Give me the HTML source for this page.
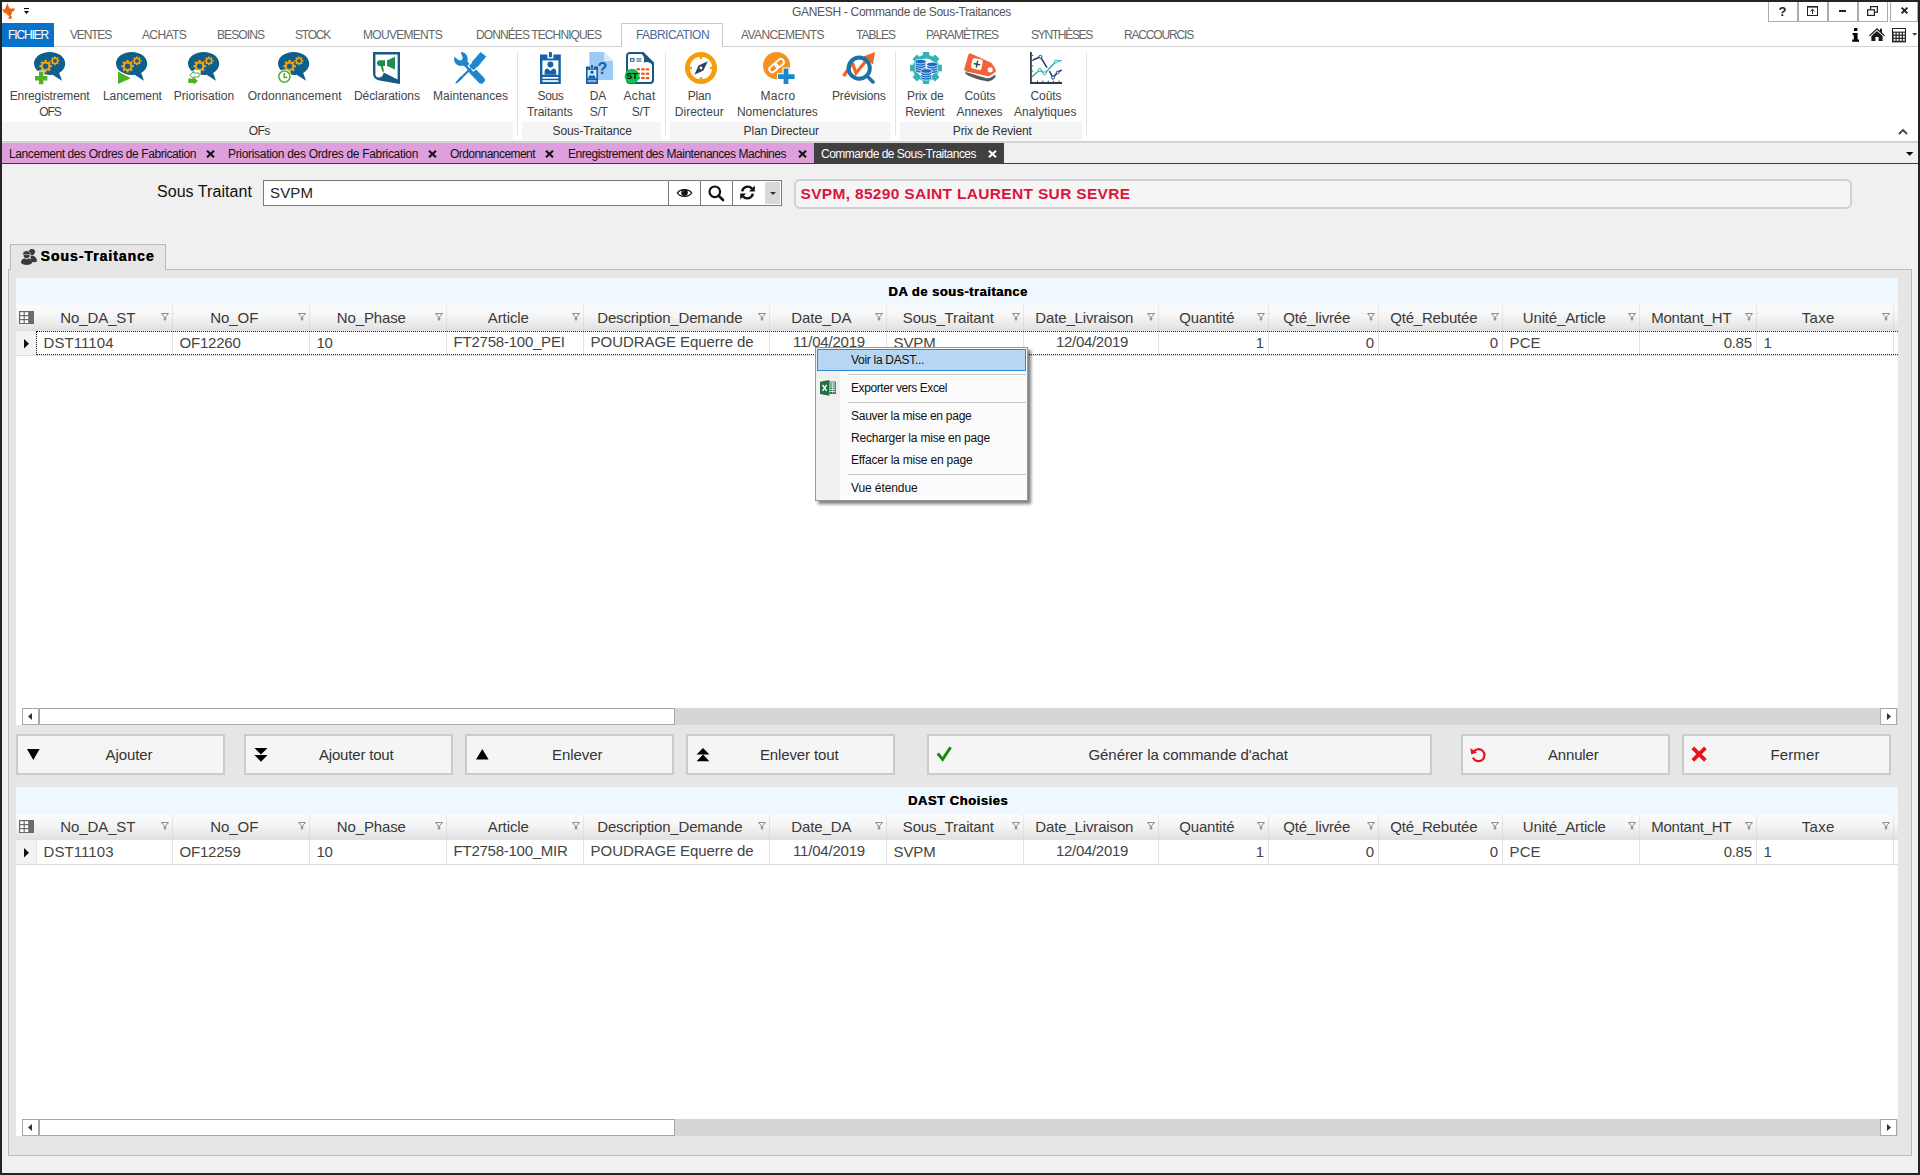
<!DOCTYPE html>
<html lang="fr"><head><meta charset="utf-8"><title>GANESH - Commande de Sous-Traitances</title>
<style>
html,body{margin:0;padding:0;}
body{width:1920px;height:1175px;overflow:hidden;position:relative;background:#f0f0f0;font-family:"Liberation Sans",Arial,sans-serif;}
.t{position:absolute;white-space:nowrap;margin:0;padding:0;}
.b{position:absolute;box-sizing:border-box;}
svg{position:absolute;overflow:visible;}
</style></head><body>

<div class="b" style="left:2px;top:2px;width:1916px;height:139px;background:#fff;"></div>
<div class="b" style="left:2px;top:141px;width:1916px;height:2px;background:linear-gradient(#cbcbcb,#dcdcdc);"></div>
<div class="t" style="left:792.00px;top:4.84px;font-size:12px;line-height:14px;color:#555;letter-spacing:-0.313px;">GANESH - Commande de Sous-Traitances</div>
<div class="b" style="left:2px;top:46px;width:1916px;height:1px;background:#d4d4d4;"></div>
<div class="b" style="left:2px;top:23px;width:52px;height:24px;background:#0872c9;"></div>
<div class="b" style="left:621px;top:23px;width:102px;height:24px;background:#fff;border:1px solid #c9c9c9;border-bottom:none;"></div>
<div class="t" style="left:8.00px;top:27.84px;font-size:12px;line-height:14px;color:#fff;letter-spacing:-1.143px;">FICHIER</div>
<div class="t" style="left:70.00px;top:27.84px;font-size:12px;line-height:14px;color:#666;letter-spacing:-1.167px;">VENTES</div>
<div class="t" style="left:142.00px;top:27.84px;font-size:12px;line-height:14px;color:#666;letter-spacing:-0.630px;">ACHATS</div>
<div class="t" style="left:217.00px;top:27.84px;font-size:12px;line-height:14px;color:#666;letter-spacing:-0.904px;">BESOINS</div>
<div class="t" style="left:295.00px;top:27.84px;font-size:12px;line-height:14px;color:#666;letter-spacing:-1.222px;">STOCK</div>
<div class="t" style="left:363.00px;top:27.84px;font-size:12px;line-height:14px;color:#666;letter-spacing:-0.700px;">MOUVEMENTS</div>
<div class="t" style="left:476.00px;top:27.84px;font-size:12px;line-height:14px;color:#666;letter-spacing:-0.896px;">DONNÉES TECHNIQUES</div>
<div class="t" style="left:636.00px;top:27.84px;font-size:12px;line-height:14px;color:#4a6a9c;letter-spacing:-0.555px;">FABRICATION</div>
<div class="t" style="left:741.00px;top:27.84px;font-size:12px;line-height:14px;color:#666;letter-spacing:-0.597px;">AVANCEMENTS</div>
<div class="t" style="left:856.00px;top:27.84px;font-size:12px;line-height:14px;color:#666;letter-spacing:-1.018px;">TABLES</div>
<div class="t" style="left:926.00px;top:27.84px;font-size:12px;line-height:14px;color:#666;letter-spacing:-0.978px;">PARAMÈTRES</div>
<div class="t" style="left:1031.00px;top:27.84px;font-size:12px;line-height:14px;color:#666;letter-spacing:-1.297px;">SYNTHÈSES</div>
<div class="t" style="left:1124.00px;top:27.84px;font-size:12px;line-height:14px;color:#666;letter-spacing:-1.169px;">RACCOURCIS</div>
<div class="b" style="left:2px;top:122px;width:511px;height:18px;background:#f5f5f5;"></div>
<div class="b" style="left:522px;top:122px;width:139px;height:18px;background:#f5f5f5;"></div>
<div class="b" style="left:670px;top:122px;width:221px;height:18px;background:#f5f5f5;"></div>
<div class="b" style="left:900px;top:122px;width:182px;height:18px;background:#f5f5f5;"></div>
<div class="b" style="left:517px;top:52px;width:1px;height:83px;background:#e2e2e2;"></div>
<div class="b" style="left:665px;top:52px;width:1px;height:83px;background:#e2e2e2;"></div>
<div class="b" style="left:895px;top:52px;width:1px;height:83px;background:#e2e2e2;"></div>
<div class="b" style="left:1086px;top:52px;width:1px;height:83px;background:#e2e2e2;"></div>
<div class="t" style="left:248.70px;top:123.84px;font-size:12px;line-height:14px;color:#333;letter-spacing:-0.552px;">OFs</div>
<div class="t" style="left:552.60px;top:123.84px;font-size:12px;line-height:14px;color:#333;letter-spacing:-0.123px;">Sous-Traitance</div>
<div class="t" style="left:743.55px;top:123.84px;font-size:12px;line-height:14px;color:#333;letter-spacing:-0.038px;">Plan Directeur</div>
<div class="t" style="left:952.85px;top:123.84px;font-size:12px;line-height:14px;color:#333;letter-spacing:-0.164px;">Prix de Revient</div>
<div class="t" style="left:9.70px;top:88.84px;font-size:12px;line-height:14px;color:#444;letter-spacing:-0.111px;">Enregistrement</div>
<div class="t" style="left:39.20px;top:104.84px;font-size:12px;line-height:14px;color:#444;letter-spacing:-1.019px;">OFS</div>
<div class="t" style="left:102.95px;top:88.84px;font-size:12px;line-height:14px;color:#444;letter-spacing:-0.051px;">Lancement</div>
<div class="t" style="left:173.75px;top:88.84px;font-size:12px;line-height:14px;color:#444;letter-spacing:0.039px;">Priorisation</div>
<div class="t" style="left:247.65px;top:88.84px;font-size:12px;line-height:14px;color:#444;letter-spacing:0.085px;">Ordonnancement</div>
<div class="t" style="left:353.95px;top:88.84px;font-size:12px;line-height:14px;color:#444;letter-spacing:-0.067px;">Déclarations</div>
<div class="t" style="left:433.05px;top:88.84px;font-size:12px;line-height:14px;color:#444;letter-spacing:0.016px;">Maintenances</div>
<div class="t" style="left:537.50px;top:88.84px;font-size:12px;line-height:14px;color:#444;letter-spacing:-0.336px;">Sous</div>
<div class="t" style="left:527.00px;top:104.84px;font-size:12px;line-height:14px;color:#444;letter-spacing:-0.070px;">Traitants</div>
<div class="t" style="left:589.85px;top:88.84px;font-size:12px;line-height:14px;color:#444;letter-spacing:-0.186px;">DA</div>
<div class="t" style="left:589.80px;top:104.84px;font-size:12px;line-height:14px;color:#444;letter-spacing:-0.285px;">S/T</div>
<div class="t" style="left:623.60px;top:88.84px;font-size:12px;line-height:14px;color:#444;letter-spacing:0.266px;">Achat</div>
<div class="t" style="left:631.75px;top:104.84px;font-size:12px;line-height:14px;color:#444;letter-spacing:-0.185px;">S/T</div>
<div class="t" style="left:687.70px;top:88.84px;font-size:12px;line-height:14px;color:#444;letter-spacing:-0.204px;">Plan</div>
<div class="t" style="left:674.75px;top:104.84px;font-size:12px;line-height:14px;color:#444;letter-spacing:0.024px;">Directeur</div>
<div class="t" style="left:760.50px;top:88.84px;font-size:12px;line-height:14px;color:#444;letter-spacing:0.331px;">Macro</div>
<div class="t" style="left:736.90px;top:104.84px;font-size:12px;line-height:14px;color:#444;letter-spacing:0.023px;">Nomenclatures</div>
<div class="t" style="left:832.05px;top:88.84px;font-size:12px;line-height:14px;color:#444;letter-spacing:-0.186px;">Prévisions</div>
<div class="t" style="left:907.00px;top:88.84px;font-size:12px;line-height:14px;color:#444;letter-spacing:-0.106px;">Prix de</div>
<div class="t" style="left:905.15px;top:104.84px;font-size:12px;line-height:14px;color:#444;letter-spacing:-0.198px;">Revient</div>
<div class="t" style="left:964.45px;top:88.84px;font-size:12px;line-height:14px;color:#444;letter-spacing:-0.049px;">Coûts</div>
<div class="t" style="left:956.55px;top:104.84px;font-size:12px;line-height:14px;color:#444;letter-spacing:-0.112px;">Annexes</div>
<div class="t" style="left:1030.45px;top:88.84px;font-size:12px;line-height:14px;color:#444;letter-spacing:-0.049px;">Coûts</div>
<div class="t" style="left:1013.95px;top:104.84px;font-size:12px;line-height:14px;color:#444;letter-spacing:0.043px;">Analytiques</div>
<svg style="left:34px;top:52px" width="32" height="32" viewBox="0 0 32 32"><path d="M15.6,0 C24.5,0 31.2,5 31.2,11.6 C31.2,15.6 28.8,19 25.2,21 L28,28.8 L18.6,22.8 C17.6,23 16.6,23.1 15.6,23.1 C7,23.1 0,18 0,11.6 C0,5 7,0 15.6,0Z" fill="#0f5f8c"/><path d="M16.16,13.06 L17.78,12.97 L17.78,15.43 L16.16,15.34 A4.7,4.7 0 0 1 15.63,16.62 L16.84,17.70 L15.10,19.44 L14.02,18.23 A4.7,4.7 0 0 1 12.74,18.76 L12.83,20.38 L10.37,20.38 L10.46,18.76 A4.7,4.7 0 0 1 9.18,18.23 L8.10,19.44 L6.36,17.70 L7.57,16.62 A4.7,4.7 0 0 1 7.04,15.34 L5.42,15.43 L5.42,12.97 L7.04,13.06 A4.7,4.7 0 0 1 7.57,11.78 L6.36,10.70 L8.10,8.96 L9.18,10.17 A4.7,4.7 0 0 1 10.46,9.64 L10.37,8.02 L12.83,8.02 L12.74,9.64 A4.7,4.7 0 0 1 14.02,10.17 L15.10,8.96 L16.84,10.70 L15.63,11.78 A4.7,4.7 0 0 1 16.16,13.06Z M14.30,14.20 A2.7,2.7 0 1 0 8.90,14.20 A2.7,2.7 0 1 0 14.30,14.20Z" fill="#f5a30f" fill-rule="evenodd"/><path d="M24.20,8.00 L25.41,7.92 L25.41,9.68 L24.20,9.60 A3.3,3.3 0 0 1 23.83,10.50 L24.74,11.30 L23.50,12.54 L22.70,11.63 A3.3,3.3 0 0 1 21.80,12.00 L21.88,13.21 L20.12,13.21 L20.20,12.00 A3.3,3.3 0 0 1 19.30,11.63 L18.50,12.54 L17.26,11.30 L18.17,10.50 A3.3,3.3 0 0 1 17.80,9.60 L16.59,9.68 L16.59,7.92 L17.80,8.00 A3.3,3.3 0 0 1 18.17,7.10 L17.26,6.30 L18.50,5.06 L19.30,5.97 A3.3,3.3 0 0 1 20.20,5.60 L20.12,4.39 L21.88,4.39 L21.80,5.60 A3.3,3.3 0 0 1 22.70,5.97 L23.50,5.06 L24.74,6.30 L23.83,7.10 A3.3,3.3 0 0 1 24.20,8.00Z M22.90,8.80 A1.9,1.9 0 1 0 19.10,8.80 A1.9,1.9 0 1 0 22.90,8.80Z" fill="#f5a30f" fill-rule="evenodd"/><path d="M4,18.4 h6.4 v4.4 h4.4 v6.6 h-4.4 v3 h-6.4 v-3 h-4.4 v-6.6 h4.4z" fill="#fff"/><path d="M5,19.5 h4.4 v4.4 h4 v4.5 h-4 v3.8 h-4.4 v-3.8 h-4 v-4.5 h4z" fill="#4fb02a"/></svg><svg style="left:116px;top:52px" width="32" height="32" viewBox="0 0 32 32"><path d="M15.6,0 C24.5,0 31.2,5 31.2,11.6 C31.2,15.6 28.8,19 25.2,21 L28,28.8 L18.6,22.8 C17.6,23 16.6,23.1 15.6,23.1 C7,23.1 0,18 0,11.6 C0,5 7,0 15.6,0Z" fill="#0f5f8c"/><path d="M16.16,13.06 L17.78,12.97 L17.78,15.43 L16.16,15.34 A4.7,4.7 0 0 1 15.63,16.62 L16.84,17.70 L15.10,19.44 L14.02,18.23 A4.7,4.7 0 0 1 12.74,18.76 L12.83,20.38 L10.37,20.38 L10.46,18.76 A4.7,4.7 0 0 1 9.18,18.23 L8.10,19.44 L6.36,17.70 L7.57,16.62 A4.7,4.7 0 0 1 7.04,15.34 L5.42,15.43 L5.42,12.97 L7.04,13.06 A4.7,4.7 0 0 1 7.57,11.78 L6.36,10.70 L8.10,8.96 L9.18,10.17 A4.7,4.7 0 0 1 10.46,9.64 L10.37,8.02 L12.83,8.02 L12.74,9.64 A4.7,4.7 0 0 1 14.02,10.17 L15.10,8.96 L16.84,10.70 L15.63,11.78 A4.7,4.7 0 0 1 16.16,13.06Z M14.30,14.20 A2.7,2.7 0 1 0 8.90,14.20 A2.7,2.7 0 1 0 14.30,14.20Z" fill="#f5a30f" fill-rule="evenodd"/><path d="M24.20,8.00 L25.41,7.92 L25.41,9.68 L24.20,9.60 A3.3,3.3 0 0 1 23.83,10.50 L24.74,11.30 L23.50,12.54 L22.70,11.63 A3.3,3.3 0 0 1 21.80,12.00 L21.88,13.21 L20.12,13.21 L20.20,12.00 A3.3,3.3 0 0 1 19.30,11.63 L18.50,12.54 L17.26,11.30 L18.17,10.50 A3.3,3.3 0 0 1 17.80,9.60 L16.59,9.68 L16.59,7.92 L17.80,8.00 A3.3,3.3 0 0 1 18.17,7.10 L17.26,6.30 L18.50,5.06 L19.30,5.97 A3.3,3.3 0 0 1 20.20,5.60 L20.12,4.39 L21.88,4.39 L21.80,5.60 A3.3,3.3 0 0 1 22.70,5.97 L23.50,5.06 L24.74,6.30 L23.83,7.10 A3.3,3.3 0 0 1 24.20,8.00Z M22.90,8.80 A1.9,1.9 0 1 0 19.10,8.80 A1.9,1.9 0 1 0 22.90,8.80Z" fill="#f5a30f" fill-rule="evenodd"/><path d="M0.5,17.5 L17,26 L0.5,33z" fill="#fff"/><path d="M2,19.6 L14.8,26.2 L2,32z" fill="#4fb02a"/></svg><svg style="left:188px;top:52px" width="32" height="32" viewBox="0 0 32 32"><path d="M15.6,0 C24.5,0 31.2,5 31.2,11.6 C31.2,15.6 28.8,19 25.2,21 L28,28.8 L18.6,22.8 C17.6,23 16.6,23.1 15.6,23.1 C7,23.1 0,18 0,11.6 C0,5 7,0 15.6,0Z" fill="#0f5f8c"/><path d="M16.16,13.06 L17.78,12.97 L17.78,15.43 L16.16,15.34 A4.7,4.7 0 0 1 15.63,16.62 L16.84,17.70 L15.10,19.44 L14.02,18.23 A4.7,4.7 0 0 1 12.74,18.76 L12.83,20.38 L10.37,20.38 L10.46,18.76 A4.7,4.7 0 0 1 9.18,18.23 L8.10,19.44 L6.36,17.70 L7.57,16.62 A4.7,4.7 0 0 1 7.04,15.34 L5.42,15.43 L5.42,12.97 L7.04,13.06 A4.7,4.7 0 0 1 7.57,11.78 L6.36,10.70 L8.10,8.96 L9.18,10.17 A4.7,4.7 0 0 1 10.46,9.64 L10.37,8.02 L12.83,8.02 L12.74,9.64 A4.7,4.7 0 0 1 14.02,10.17 L15.10,8.96 L16.84,10.70 L15.63,11.78 A4.7,4.7 0 0 1 16.16,13.06Z M14.30,14.20 A2.7,2.7 0 1 0 8.90,14.20 A2.7,2.7 0 1 0 14.30,14.20Z" fill="#f5a30f" fill-rule="evenodd"/><path d="M24.20,8.00 L25.41,7.92 L25.41,9.68 L24.20,9.60 A3.3,3.3 0 0 1 23.83,10.50 L24.74,11.30 L23.50,12.54 L22.70,11.63 A3.3,3.3 0 0 1 21.80,12.00 L21.88,13.21 L20.12,13.21 L20.20,12.00 A3.3,3.3 0 0 1 19.30,11.63 L18.50,12.54 L17.26,11.30 L18.17,10.50 A3.3,3.3 0 0 1 17.80,9.60 L16.59,9.68 L16.59,7.92 L17.80,8.00 A3.3,3.3 0 0 1 18.17,7.10 L17.26,6.30 L18.50,5.06 L19.30,5.97 A3.3,3.3 0 0 1 20.20,5.60 L20.12,4.39 L21.88,4.39 L21.80,5.60 A3.3,3.3 0 0 1 22.70,5.97 L23.50,5.06 L24.74,6.30 L23.83,7.10 A3.3,3.3 0 0 1 24.20,8.00Z M22.90,8.80 A1.9,1.9 0 1 0 19.10,8.80 A1.9,1.9 0 1 0 22.90,8.80Z" fill="#f5a30f" fill-rule="evenodd"/><path d="M0.5,23 L6,17.8 L12.5,18.5 L12.5,26.5 L6,27z" fill="#fff"/><path d="M1.8,23 L5.8,19.3 V21 H11 V25 H5.8 V26.7z" fill="#fff" stroke="#4fb02a" stroke-width="1"/><path d="M0.3,26.6 H5.8 V25.2 L10,29 L5.8,32.4 V31 H0.3z" fill="#4fb02a"/></svg><svg style="left:278px;top:52px" width="32" height="32" viewBox="0 0 32 32"><path d="M15.6,0 C24.5,0 31.2,5 31.2,11.6 C31.2,15.6 28.8,19 25.2,21 L28,28.8 L18.6,22.8 C17.6,23 16.6,23.1 15.6,23.1 C7,23.1 0,18 0,11.6 C0,5 7,0 15.6,0Z" fill="#0f5f8c"/><path d="M16.16,13.06 L17.78,12.97 L17.78,15.43 L16.16,15.34 A4.7,4.7 0 0 1 15.63,16.62 L16.84,17.70 L15.10,19.44 L14.02,18.23 A4.7,4.7 0 0 1 12.74,18.76 L12.83,20.38 L10.37,20.38 L10.46,18.76 A4.7,4.7 0 0 1 9.18,18.23 L8.10,19.44 L6.36,17.70 L7.57,16.62 A4.7,4.7 0 0 1 7.04,15.34 L5.42,15.43 L5.42,12.97 L7.04,13.06 A4.7,4.7 0 0 1 7.57,11.78 L6.36,10.70 L8.10,8.96 L9.18,10.17 A4.7,4.7 0 0 1 10.46,9.64 L10.37,8.02 L12.83,8.02 L12.74,9.64 A4.7,4.7 0 0 1 14.02,10.17 L15.10,8.96 L16.84,10.70 L15.63,11.78 A4.7,4.7 0 0 1 16.16,13.06Z M14.30,14.20 A2.7,2.7 0 1 0 8.90,14.20 A2.7,2.7 0 1 0 14.30,14.20Z" fill="#f5a30f" fill-rule="evenodd"/><path d="M24.20,8.00 L25.41,7.92 L25.41,9.68 L24.20,9.60 A3.3,3.3 0 0 1 23.83,10.50 L24.74,11.30 L23.50,12.54 L22.70,11.63 A3.3,3.3 0 0 1 21.80,12.00 L21.88,13.21 L20.12,13.21 L20.20,12.00 A3.3,3.3 0 0 1 19.30,11.63 L18.50,12.54 L17.26,11.30 L18.17,10.50 A3.3,3.3 0 0 1 17.80,9.60 L16.59,9.68 L16.59,7.92 L17.80,8.00 A3.3,3.3 0 0 1 18.17,7.10 L17.26,6.30 L18.50,5.06 L19.30,5.97 A3.3,3.3 0 0 1 20.20,5.60 L20.12,4.39 L21.88,4.39 L21.80,5.60 A3.3,3.3 0 0 1 22.70,5.97 L23.50,5.06 L24.74,6.30 L23.83,7.10 A3.3,3.3 0 0 1 24.20,8.00Z M22.90,8.80 A1.9,1.9 0 1 0 19.10,8.80 A1.9,1.9 0 1 0 22.90,8.80Z" fill="#f5a30f" fill-rule="evenodd"/><circle cx="6.4" cy="24.6" r="7.2" fill="#fff"/><circle cx="6.4" cy="24.6" r="5.6" fill="#fff" stroke="#4fb02a" stroke-width="1.5"/><path d="M6.2,21 V25.6 H9.4" fill="none" stroke="#4fb02a" stroke-width="1.5"/></svg><svg style="left:373px;top:52px" width="27" height="32" viewBox="0 0 27 32"><path d="M0,0 H27 V32 L6.5,28.5 C2,27.6 0,25 0,21z" fill="#145a85"/><path d="M2.4,2.4 H24.6 V27.5 L10.6,20.6 C10.4,24 8.2,25.6 5.8,25.6 C3.6,25.6 2.4,24 2.4,22z" fill="#fff"/><path d="M14,8.5 L22,4.8 V17.4 L14,13.9z" fill="#218a4d"/><path d="M6.4,8.3 H12 V14 H7 C5,14 4,12.6 4,11.2 C4,9.6 5,8.3 6.4,8.3z" fill="#218a4d"/><path d="M7.6,13.5 L9.8,13.5 L11,19.4 L9.4,19.8z" fill="#218a4d"/></svg><svg style="left:454px;top:52px" width="32" height="32" viewBox="0 0 32 32"><path d="M9,9 L16,16" stroke="#1c86d1" stroke-width="5.4" fill="none"/><path d="M17.4,17.8 L27.2,28" stroke="#1c86d1" stroke-width="7.2" stroke-linecap="round" fill="none"/><circle cx="6.9" cy="7" r="6.9" fill="#1c86d1"/><path d="M-1,-2 L5.6,-2.6 L8.6,5.4 C8.8,7.6 6.4,9.2 4.6,8 L-2,3z" fill="#fff"/><g stroke="#fff" stroke-width="1.1" stroke-linejoin="round"><path d="M26.6,0.4 L31.8,4.6 L23.6,14.4 L21.2,17.6 L19.4,19 L14.2,14 L15.6,12 L18.4,9.8z" fill="#fff"/></g><path d="M26.6,0.4 L31.8,4.6 L23.6,14.4 L18.4,9.8z" fill="#1c86d1" stroke="#1c86d1" stroke-width="0.8" stroke-linejoin="round"/><path d="M19,9.4 L24,13.8 L19.6,18.2 L15,14z" fill="#1c86d1"/><path d="M17,16.2 L6,27" stroke="#1c86d1" stroke-width="2.3" fill="none"/><path d="M6.6,24.6 L8.4,26.6 L3.4,31 L1.2,32 L2.2,29.6z" fill="#1c86d1"/></svg><svg style="left:540px;top:52px" width="21" height="32" viewBox="0 0 21 32"><path d="M0,2.6 H7.4 V6.6 H13.4 V2.6 H20.8 V32 H0z" fill="#1460aa"/><rect x="8.9" y="0" width="3" height="5.2" fill="#1460aa"/><rect x="2.4" y="8.4" width="16" height="14.4" fill="#fff"/><circle cx="10.4" cy="12.6" r="3" fill="#1460aa"/><path d="M4.6,22.8 V19.6 C4.6,17.6 6,16.6 7.6,16.6 L10.4,19 L13.2,16.6 C14.8,16.6 16.2,17.6 16.2,19.6 V22.8z" fill="#1460aa"/><rect x="2.4" y="25" width="16" height="1.7" fill="#fff"/><rect x="2.4" y="28.2" width="16" height="1.7" fill="#fff"/></svg><svg style="left:586px;top:52px" width="27" height="32" viewBox="0 0 27 32"><path d="M3.4,0 H18 L27,9 V28 H3.4z" fill="#9ccaf6"/><path d="M18,0 L27,9 H18z" fill="#d7eafc"/><path d="M0,14.6 H4 V16.6 H8 V14.6 H12 V32 H0z" fill="#1460aa"/><rect x="5" y="13" width="2" height="3" fill="#1460aa"/><rect x="1.6" y="17.8" width="8.8" height="8.4" fill="#d7eafc"/><circle cx="6" cy="20.2" r="1.6" fill="#1460aa"/><path d="M2.6,26.2 C2.6,23.4 4.4,22.6 6,24 C7.6,22.6 9.4,23.4 9.4,26.2z" fill="#1460aa"/><rect x="1.6" y="28" width="8.8" height="2.2" fill="#8fb0d4"/><text x="11.6" y="21.6" font-family="Liberation Sans,sans-serif" font-weight="bold" font-size="16" fill="#1f5f93">?</text></svg><svg style="left:626px;top:52px" width="28" height="32" viewBox="0 0 28 32"><path d="M4,1 H17 L27,11 V28 C27,30 25.6,31 24,31 H4 C2.4,31 1,30 1,28 V4 C1,2.2 2.2,1 4,1z" fill="#fff" stroke="#145a82" stroke-width="2"/><path d="M14,1 H17.4 L27.4,11 V15 C25,9.6 21,9.4 17.6,10.4 C19,6.4 17.8,3 14,1z" fill="#145a82"/><rect x="4.6" y="6.6" width="3.4" height="2.6" fill="#fff" stroke="#145a82" stroke-width="1"/><rect x="10.4" y="6.4" width="5" height="1" fill="#145a82"/><rect x="10.4" y="8.6" width="5" height="1" fill="#145a82"/><rect x="10.6" y="16.2" width="3.4" height="2.2" fill="#f4511e"/><rect x="15.2" y="16.2" width="3.4" height="2.2" fill="#f4511e"/><rect x="19.799999999999997" y="16.2" width="3.4" height="2.2" fill="#f4511e"/><rect x="10.6" y="20.6" width="3.4" height="2.2" fill="#f4511e"/><rect x="15.2" y="20.6" width="3.4" height="2.2" fill="#f4511e"/><rect x="19.799999999999997" y="20.6" width="3.4" height="2.2" fill="#f4511e"/><rect x="10.6" y="25.0" width="3.4" height="2.2" fill="#f4511e"/><rect x="15.2" y="25.0" width="3.4" height="2.2" fill="#f4511e"/><rect x="19.799999999999997" y="25.0" width="3.4" height="2.2" fill="#f4511e"/><circle cx="6" cy="24.2" r="7.4" fill="#0fbf4f"/><text x="6" y="27.4" text-anchor="middle" font-family="Liberation Sans,sans-serif" font-weight="bold" font-size="9" fill="#000">ST</text></svg><svg style="left:685px;top:52px" width="32" height="32" viewBox="0 0 32 32"><circle cx="16" cy="16" r="13.6" fill="#fff" stroke="#f59c0b" stroke-width="4.8"/><rect x="14.8" y="4" width="2.4" height="3" fill="#f59c0b"/><rect x="14.8" y="25" width="2.4" height="3" fill="#f59c0b"/><rect x="4" y="14.8" width="3" height="2.4" fill="#f59c0b"/><rect x="25" y="14.8" width="3" height="2.4" fill="#f59c0b"/><path d="M22.8,9.2 L18.4,18.4 L9.4,22.8 L13.6,13.6z" fill="#2e3f5c"/><circle cx="16" cy="16" r="1.4" fill="#fff"/></svg><svg style="left:763px;top:52px" width="33" height="33" viewBox="0 0 33 33"><circle cx="13.6" cy="13.6" r="13.6" fill="#f5921e"/><g transform="rotate(-40 13.6 13.6)" fill="none" stroke="#fff" stroke-width="1.9"><rect x="5" y="10.6" width="9.6" height="6" rx="3"/><rect x="12.6" y="10.6" width="9.6" height="6" rx="3"/></g><path d="M19.4,15.4 H26.6 V21.2 H32.6 V28.2 H26.6 V33 H19.4 V28.2 H14 V21.2 H19.4z" fill="#fff"/><path d="M20.6,16.6 H25.4 V22.2 H31.6 V27 H25.4 V32 H20.6 V27 H15 V22.2 H20.6z" fill="#1c86d1"/></svg><svg style="left:843px;top:52px" width="32" height="32" viewBox="0 0 32 32"><path d="M0.6,24 L9.4,11 L13,21 L25,6.4" fill="none" stroke="#f26522" stroke-width="3.2" stroke-linejoin="miter"/><path d="M20.4,4.4 L32,0 L30,12.4z" fill="#f26522"/><circle cx="16.2" cy="16.2" r="10.6" fill="none" stroke="#1874a8" stroke-width="4"/><path d="M23.4,25.8 L26,23.4 L32,29.4 L31.4,31.6 L29,31.8z" fill="#1874a8"/></svg><svg style="left:910px;top:52px" width="32" height="32" viewBox="0 0 32 32"><path d="M28.80,12.79 L31.89,12.84 L31.89,19.16 L28.80,19.21 A13.2,13.2 0 0 1 27.32,22.79 L29.47,25.00 L25.00,29.47 L22.79,27.32 A13.2,13.2 0 0 1 19.21,28.80 L19.16,31.89 L12.84,31.89 L12.79,28.80 A13.2,13.2 0 0 1 9.21,27.32 L7.00,29.47 L2.53,25.00 L4.68,22.79 A13.2,13.2 0 0 1 3.20,19.21 L0.11,19.16 L0.11,12.84 L3.20,12.79 A13.2,13.2 0 0 1 4.68,9.21 L2.53,7.00 L7.00,2.53 L9.21,4.68 A13.2,13.2 0 0 1 12.79,3.20 L12.84,0.11 L19.16,0.11 L19.21,3.20 A13.2,13.2 0 0 1 22.79,4.68 L25.00,2.53 L29.47,7.00 L27.32,9.21 A13.2,13.2 0 0 1 28.80,12.79Z" fill="#2fb3b5"/><circle cx="16" cy="16" r="9.6" fill="#fff"/><ellipse cx="10.6" cy="18.799999999999997" rx="5.6" ry="2.2" fill="#1767c4" stroke="#fff" stroke-width="0.7"/><ellipse cx="10.6" cy="16.5" rx="5.6" ry="2.2" fill="#1767c4" stroke="#fff" stroke-width="0.7"/><ellipse cx="10.6" cy="14.2" rx="5.6" ry="2.2" fill="#1767c4" stroke="#fff" stroke-width="0.7"/><ellipse cx="10.6" cy="11.899999999999999" rx="5.6" ry="2.2" fill="#1767c4" stroke="#fff" stroke-width="0.7"/><ellipse cx="10.6" cy="9.6" rx="5.6" ry="2.2" fill="#1767c4" stroke="#fff" stroke-width="0.7"/><ellipse cx="22.2" cy="19.3" rx="5.6" ry="2.2" fill="#1767c4" stroke="#fff" stroke-width="0.7"/><ellipse cx="22.2" cy="17.0" rx="5.6" ry="2.2" fill="#1767c4" stroke="#fff" stroke-width="0.7"/><ellipse cx="22.2" cy="14.7" rx="5.6" ry="2.2" fill="#1767c4" stroke="#fff" stroke-width="0.7"/><ellipse cx="22.2" cy="12.4" rx="5.6" ry="2.2" fill="#1767c4" stroke="#fff" stroke-width="0.7"/><ellipse cx="16.2" cy="25.9" rx="5.6" ry="2.2" fill="#1767c4" stroke="#fff" stroke-width="0.7"/><ellipse cx="16.2" cy="23.6" rx="5.6" ry="2.2" fill="#1767c4" stroke="#fff" stroke-width="0.7"/><ellipse cx="16.2" cy="21.3" rx="5.6" ry="2.2" fill="#1767c4" stroke="#fff" stroke-width="0.7"/><ellipse cx="16.2" cy="19.0" rx="5.6" ry="2.2" fill="#1767c4" stroke="#fff" stroke-width="0.7"/></svg><svg style="left:964px;top:53px" width="32" height="30" viewBox="0 0 32 30"><path d="M1.2,20.6 C6,24.4 16,27.4 23.6,28.4 C27,28.8 30.6,25.6 31.6,23.6 L31.2,21.4 C28,24 25.4,25.6 22.6,25.2 L1.6,19z" fill="#58595b"/><path d="M6.8,0.6 L26.6,9.6 C28.4,10.6 31.4,15.4 32,17.6 C32.2,19 27.6,22.6 24,23.2 L2.2,18.4 C0.6,18 0,16.8 0.4,15.6 L4.2,2.2 C4.6,0.8 5.6,0.2 6.8,0.6z" fill="#f4623a"/><rect x="7.6" y="5.8" width="10.6" height="10.6" rx="2" fill="#fff" transform="rotate(12 13 11)"/><path d="M13,7.6 V14.6 M9.6,11.2 H16.4" stroke="#444" stroke-width="1.4" fill="none" transform="rotate(12 13 11)"/><circle cx="26.2" cy="16.8" r="2.6" fill="#fff"/></svg><svg style="left:1030px;top:52px" width="32" height="32" viewBox="0 0 32 32"><path d="M0,0 H1.8 V30 H32 V32 H0z" fill="#2f3b4c"/><rect x="1.8" y="3.0" width="1.4" height="0.9" fill="#2f3b4c"/><rect x="1.8" y="8.2" width="1.4" height="0.9" fill="#2f3b4c"/><rect x="1.8" y="13.4" width="1.4" height="0.9" fill="#2f3b4c"/><rect x="1.8" y="18.6" width="1.4" height="0.9" fill="#2f3b4c"/><rect x="1.8" y="23.8" width="1.4" height="0.9" fill="#2f3b4c"/><rect x="7.0" y="28.6" width="0.9" height="1.4" fill="#2f3b4c"/><rect x="12.4" y="28.6" width="0.9" height="1.4" fill="#2f3b4c"/><rect x="17.8" y="28.6" width="0.9" height="1.4" fill="#2f3b4c"/><rect x="23.200000000000003" y="28.6" width="0.9" height="1.4" fill="#2f3b4c"/><rect x="28.6" y="28.6" width="0.9" height="1.4" fill="#2f3b4c"/><path d="M3,8 L10.4,4.8 L17,15.6" fill="none" stroke="#1f3f72" stroke-width="1.5"/><path d="M19.4,19.2 L23,25.6 L27.6,20.4 L31.6,18" fill="none" stroke="#1f3f72" stroke-width="1.5"/><path d="M3,24 L9.8,17.8 L14.6,21.4 L26,9.4 L31.6,8.6" fill="none" stroke="#2fb3b5" stroke-width="1.5"/><circle cx="10.4" cy="4.8" r="1.5" fill="#fff" stroke="#1f3f72" stroke-width="1"/><circle cx="23" cy="25.6" r="1.5" fill="#fff" stroke="#1f3f72" stroke-width="1"/><circle cx="27.6" cy="20.4" r="1.3" fill="#fff" stroke="#1f3f72" stroke-width="1"/><circle cx="9.8" cy="17.8" r="1.5" fill="#fff" stroke="#2fb3b5" stroke-width="1"/><circle cx="14.6" cy="21.4" r="1.5" fill="#fff" stroke="#2fb3b5" stroke-width="1"/><circle cx="26" cy="9.4" r="1.5" fill="#fff" stroke="#2fb3b5" stroke-width="1"/></svg>
<svg style="left:2px;top:3px" width="14" height="16" viewBox="0 0 14 16"><path d="M5.4,0 L6.6,3.6 L7.6,5.4 L13,5.6 L12,8.2 L10.2,8.6 L9.6,11 L8.6,12.4 L10,13.6 L9.6,15.4 L7.6,16 L6,15 L7.4,13.6 L6.4,12.6 L5,11.4 L3.6,9.8 L2.4,10.2 L0,6 L2.6,6.4 L3.8,4.4z" fill="#f4610e"/></svg><svg style="left:24px;top:8px" width="5" height="6" viewBox="0 0 5 6"><rect x="0" y="0" width="5" height="1.1" fill="#000"/><path d="M0,3 H5 L2.5,5.9z" fill="#000"/></svg><div class="b" style="left:1768px;top:1px;width:30px;height:21px;border:1px solid #ababab;border-top:none;background:#fff"></div><div class="b" style="left:1798px;top:1px;width:30px;height:21px;border:1px solid #ababab;border-top:none;background:#fff"></div><div class="b" style="left:1828px;top:1px;width:30px;height:21px;border:1px solid #ababab;border-top:none;background:#fff"></div><div class="b" style="left:1858px;top:1px;width:30px;height:21px;border:1px solid #ababab;border-top:none;background:#fff"></div><div class="b" style="left:1890px;top:1px;width:28px;height:21px;border:1px solid #ababab;border-top:none;background:#fff"></div><div class="t" style="left:1778.5px;top:3.5px;font-size:13px;line-height:15px;font-weight:bold;color:#222">?</div><svg style="left:1807px;top:6px" width="11" height="10" viewBox="0 0 11 10"><rect x="0.5" y="0.5" width="10" height="9" fill="none" stroke="#222" stroke-width="1"/><rect x="0" y="0" width="11" height="1.6" fill="#222"/><path d="M5.5,8 V3.4 M3.4,5.4 L5.5,3.3 L7.6,5.4" fill="none" stroke="#222" stroke-width="1"/></svg><div class="b" style="left:1839px;top:10px;width:7px;height:2px;background:#222"></div><svg style="left:1867px;top:6px" width="11" height="10" viewBox="0 0 11 10"><rect x="3.6" y="0.6" width="6.8" height="5.6" fill="none" stroke="#222" stroke-width="1.2"/><rect x="0.6" y="3.8" width="6.8" height="5.6" fill="#fff" stroke="#222" stroke-width="1.2"/></svg><svg style="left:1901px;top:7px" width="7" height="7" viewBox="0 0 7 7"><path d="M0.6,0.6 L6.4,6.4 M6.4,0.6 L0.6,6.4" stroke="#222" stroke-width="1.9" fill="none"/></svg><svg style="left:1852px;top:28px" width="7" height="14" viewBox="0 0 7 14"><rect x="2" y="0" width="3.4" height="3" rx="0.6" fill="#000"/><path d="M0.6,5 H5.6 V11.6 H7 V13.8 H0.2 V11.6 H1.8 V7.2 H0.6z" fill="#000"/></svg><svg style="left:1869px;top:28px" width="16" height="13" viewBox="0 0 16 13"><path d="M8,0 L11,2.8 V0.8 H13 V4.6 L16,7.4 L15.2,8.3 L8,1.8 L0.8,8.3 L0,7.4z" fill="#1a1a1a"/><path d="M8,3 L13.6,8 V13 H9.6 V9 H6.4 V13 H2.4 V8z" fill="#1a1a1a"/></svg><svg style="left:1892px;top:28px" width="14" height="15" viewBox="0 0 14 15"><rect x="0.5" y="0.5" width="13" height="13.4" fill="#fff" stroke="#222" stroke-width="1"/><rect x="0.5" y="3.6" width="13" height="10.3" fill="#222"/><rect x="1.6" y="4.7" width="1.9" height="1.9" fill="#fff"/><rect x="4.7" y="4.7" width="1.9" height="1.9" fill="#fff"/><rect x="7.800000000000001" y="4.7" width="1.9" height="1.9" fill="#fff"/><rect x="10.9" y="4.7" width="1.9" height="1.9" fill="#fff"/><rect x="1.6" y="7.800000000000001" width="1.9" height="1.9" fill="#fff"/><rect x="4.7" y="7.800000000000001" width="1.9" height="1.9" fill="#fff"/><rect x="7.800000000000001" y="7.800000000000001" width="1.9" height="1.9" fill="#fff"/><rect x="10.9" y="7.800000000000001" width="1.9" height="1.9" fill="#fff"/><rect x="1.6" y="10.9" width="1.9" height="1.9" fill="#fff"/><rect x="4.7" y="10.9" width="1.9" height="1.9" fill="#fff"/><rect x="7.800000000000001" y="10.9" width="1.9" height="1.9" fill="#fff"/><rect x="10.9" y="10.9" width="1.9" height="1.9" fill="#fff"/></svg><svg style="left:1912px;top:33px" width="6" height="3" viewBox="0 0 6 3"><path d="M0,0 H5.4 L2.7,2.8z" fill="#444"/></svg><svg style="left:1898px;top:128px" width="10" height="7" viewBox="0 0 10 7"><path d="M1,6 L5,2 L9,6" fill="none" stroke="#444" stroke-width="1.8"/></svg><svg style="left:1906px;top:152px" width="8" height="4" viewBox="0 0 8 4"><path d="M0,0 H7.4 L3.7,3.8z" fill="#000"/></svg>
<div class="b" style="left:2px;top:143px;width:812px;height:20px;background:#dda0dd;"></div>
<div class="b" style="left:814px;top:143px;width:190px;height:20px;background:#404040;"></div>
<div class="b" style="left:2px;top:163px;width:1916px;height:1px;background:#3c3c3c;"></div>
<div class="t" style="left:9.00px;top:146.84px;font-size:12px;line-height:14px;color:#111;letter-spacing:-0.411px;">Lancement des Ordres de Fabrication</div>
<svg style="left:205.5px;top:149.5px" width="9" height="8" viewBox="0 0 9 8"><path d="M1,0.8 L8,7.2 M8,0.8 L1,7.2" stroke="#111" stroke-width="2.1" fill="none"/></svg>
<div class="t" style="left:228.00px;top:146.84px;font-size:12px;line-height:14px;color:#111;letter-spacing:-0.317px;">Priorisation des Ordres de Fabrication</div>
<svg style="left:427.5px;top:149.5px" width="9" height="8" viewBox="0 0 9 8"><path d="M1,0.8 L8,7.2 M8,0.8 L1,7.2" stroke="#111" stroke-width="2.1" fill="none"/></svg>
<div class="t" style="left:450.00px;top:146.84px;font-size:12px;line-height:14px;color:#111;letter-spacing:-0.550px;">Ordonnancement</div>
<svg style="left:544.5px;top:149.5px" width="9" height="8" viewBox="0 0 9 8"><path d="M1,0.8 L8,7.2 M8,0.8 L1,7.2" stroke="#111" stroke-width="2.1" fill="none"/></svg>
<div class="t" style="left:568.00px;top:146.84px;font-size:12px;line-height:14px;color:#111;letter-spacing:-0.469px;">Enregistrement des Maintenances Machines</div>
<svg style="left:797.5px;top:149.5px" width="9" height="8" viewBox="0 0 9 8"><path d="M1,0.8 L8,7.2 M8,0.8 L1,7.2" stroke="#111" stroke-width="2.1" fill="none"/></svg>
<div class="t" style="left:821.00px;top:146.84px;font-size:12px;line-height:14px;color:#fff;letter-spacing:-0.517px;">Commande de Sous-Traitances</div>
<svg style="left:987.5px;top:149.5px" width="9" height="8" viewBox="0 0 9 8"><path d="M1,0.8 L8,7.2 M8,0.8 L1,7.2" stroke="#fff" stroke-width="2.1" fill="none"/></svg>
<div class="t" style="left:157.00px;top:181.96px;font-size:16px;line-height:19px;color:#111;letter-spacing:0.049px;">Sous Traitant</div>
<div class="b" style="left:263px;top:180px;width:519px;height:26px;background:#fff;border:1px solid #7a7a7a;"></div>
<div class="b" style="left:668px;top:181px;width:1px;height:24px;background:#7a7a7a;"></div>
<div class="b" style="left:700px;top:181px;width:1px;height:24px;background:#7a7a7a;"></div>
<div class="b" style="left:732px;top:181px;width:1px;height:24px;background:#7a7a7a;"></div>
<div class="b" style="left:765px;top:182px;width:15px;height:22px;background:#d9d9d9;"></div>
<svg style="left:677px;top:188px" width="15" height="10" viewBox="0 0 15 10"><path d="M0.4,5 C3,0.6 12,0.6 14.6,5 C12,9.4 3,9.4 0.4,5z" fill="#fff" stroke="#111" stroke-width="1.3"/><circle cx="7.5" cy="4.6" r="3.3" fill="#111"/><circle cx="6.3" cy="3.4" r="1" fill="#555"/></svg><svg style="left:708px;top:185px" width="16" height="16" viewBox="0 0 16 16"><circle cx="6.8" cy="6.8" r="5.3" fill="none" stroke="#111" stroke-width="2.2"/><path d="M10.6,10.6 L15,15" stroke="#111" stroke-width="2.6" stroke-linecap="round"/></svg><svg style="left:740px;top:185px" width="15" height="15" viewBox="0 0 15 15"><path d="M2.2,6.4 A5.6,5.6 0 0 1 12,3.6" fill="none" stroke="#111" stroke-width="2.4"/><path d="M14.8,0.6 V6.4 H9z" fill="#111"/><path d="M12.8,8.6 A5.6,5.6 0 0 1 3,11.4" fill="none" stroke="#111" stroke-width="2.4"/><path d="M0.2,14.4 V8.6 H6z" fill="#111"/></svg><svg style="left:769.5px;top:192px" width="6" height="3" viewBox="0 0 6 3"><path d="M0,0 H6 L3,3z" fill="#333"/></svg>
<div class="t" style="left:270.00px;top:183.80px;font-size:15px;line-height:18px;color:#222;letter-spacing:0.125px;">SVPM</div>
<div class="b" style="left:794px;top:179px;width:1058px;height:30px;background:#f5f5f5;border:2px solid #d0d0d0;border-radius:6px;"></div>
<div class="t" style="left:800.50px;top:184.13px;font-size:15.5px;line-height:19px;color:#dc143c;font-weight:bold;letter-spacing:0.321px;">SVPM, 85290 SAINT LAURENT SUR SEVRE</div>
<div class="b" style="left:8px;top:269px;width:1904px;height:887px;background:#e6e6e6;border:1px solid #b9b9b9;"></div>
<div class="b" style="left:10px;top:244px;width:156px;height:26px;background:#e6e6e6;border:1px solid #b9b9b9;border-bottom:none;"></div>
<svg style="left:21px;top:249px" width="16" height="16" viewBox="0 0 16 16"><circle cx="11" cy="3.6" r="2.6" fill="#3a3a3a"/><path d="M7.4,3.4 C7.6,0.8 9.6,-0.4 11.2,0 C13,0.2 14.4,1.6 14.4,3.4z" fill="#3a3a3a"/><path d="M9.4,7 C13,6 16,8.6 16,12.6 C14,13.6 11.6,13.4 10.4,12.6z" fill="#3a3a3a"/><circle cx="5.6" cy="6.2" r="3" fill="#3a3a3a"/><path d="M1.6,5.6 C1.8,2.6 4,1.6 5.8,1.8 C7.8,2 9.4,3.4 9.4,5.6z" fill="#3a3a3a" stroke="#e6e6e6" stroke-width="0.5"/><path d="M0,14 C0,10.6 2,9.4 4,9.4 L5.6,10.6 L7.2,9.4 C9.4,9.4 11.2,10.6 11.2,14 C8.6,16.6 2.6,16.6 0,14z" fill="#3a3a3a"/></svg>
<div class="t" style="left:40.50px;top:248.15px;font-size:14px;line-height:17px;color:#000;font-weight:bold;letter-spacing:0.977px;text-shadow:0.35px 0 0 #000;">Sous-Traitance</div>
<div class="b" style="left:16px;top:278px;width:1882px;height:447px;background:#fff;"></div>
<div class="b" style="left:16px;top:278px;width:1882px;height:27px;background:#f0f8ff;"></div>
<div class="t" style="left:888.36px;top:283.50px;font-size:13px;line-height:16px;color:#000;font-weight:bold;letter-spacing:0.486px;text-shadow:0.4px 0 0 #000;">DA de sous-traitance</div>
<div class="b" style="left:16px;top:305px;width:1882px;height:26px;background:linear-gradient(#fafbfc,#f6f6f6 40%,#ebebeb 70%,#e0e0e0);"></div>
<div class="b" style="left:16px;top:331px;width:20px;height:24px;background:#f3f3f3;"></div>
<div class="b" style="left:36px;top:331px;width:1px;height:24px;background:#e2e2e2;"></div>
<svg style="left:19px;top:311px" width="15" height="13" viewBox="0 0 15 13"><rect x="0" y="0" width="15" height="13" fill="#6b6b6b"/><rect x="1.2" y="1.2" width="3.4" height="2.8" fill="#fff"/><rect x="5.8" y="1.2" width="3.4" height="2.8" fill="#fff"/><rect x="1.2" y="5.2" width="3.4" height="2.8" fill="#fff"/><rect x="5.8" y="5.2" width="3.4" height="2.8" fill="#fff"/><rect x="1.2" y="9.2" width="3.4" height="2.8" fill="#fff"/><rect x="5.8" y="9.2" width="3.4" height="2.8" fill="#fff"/></svg>
<svg style="left:24px;top:339px" width="5" height="10" viewBox="0 0 5 10"><path d="M0,0 L5,4.8 L0,9.6z" fill="#111"/></svg>
<div class="b" style="left:172px;top:305px;width:1px;height:26px;background:linear-gradient(#ececec,#d6d6d6);"></div>
<div class="b" style="left:172px;top:331px;width:1px;height:24px;background:#e2e2e2;"></div>
<div class="t" style="left:60.30px;top:308.80px;font-size:15px;line-height:18px;color:#3a3a3a;letter-spacing:-0.105px;">No_DA_ST</div>
<svg style="left:160.5px;top:313px" width="8" height="8" viewBox="0 0 8 8"><path d="M0.5,0.6 H7.5 L4.7,3.6 V7 H3.3 V3.6z" fill="#fff" stroke="#858585" stroke-width="1"/></svg>
<div class="t" style="left:43.60px;top:333.80px;font-size:15px;line-height:18px;color:#444;letter-spacing:0.064px;">DST11104</div>
<div class="b" style="left:309px;top:305px;width:1px;height:26px;background:linear-gradient(#ececec,#d6d6d6);"></div>
<div class="b" style="left:309px;top:331px;width:1px;height:24px;background:#e2e2e2;"></div>
<div class="t" style="left:210.30px;top:308.80px;font-size:15px;line-height:18px;color:#3a3a3a;letter-spacing:-0.069px;">No_OF</div>
<svg style="left:297.5px;top:313px" width="8" height="8" viewBox="0 0 8 8"><path d="M0.5,0.6 H7.5 L4.7,3.6 V7 H3.3 V3.6z" fill="#fff" stroke="#858585" stroke-width="1"/></svg>
<div class="t" style="left:179.60px;top:333.80px;font-size:15px;line-height:18px;color:#444;letter-spacing:-0.221px;">OF12260</div>
<div class="b" style="left:446px;top:305px;width:1px;height:26px;background:linear-gradient(#ececec,#d6d6d6);"></div>
<div class="b" style="left:446px;top:331px;width:1px;height:24px;background:#e2e2e2;"></div>
<div class="t" style="left:336.80px;top:308.80px;font-size:15px;line-height:18px;color:#3a3a3a;letter-spacing:-0.131px;">No_Phase</div>
<svg style="left:434.5px;top:313px" width="8" height="8" viewBox="0 0 8 8"><path d="M0.5,0.6 H7.5 L4.7,3.6 V7 H3.3 V3.6z" fill="#fff" stroke="#858585" stroke-width="1"/></svg>
<div class="t" style="left:316.60px;top:333.80px;font-size:15px;line-height:18px;color:#444;letter-spacing:-0.344px;">10</div>
<div class="b" style="left:583px;top:305px;width:1px;height:26px;background:linear-gradient(#ececec,#d6d6d6);"></div>
<div class="b" style="left:583px;top:331px;width:1px;height:24px;background:#e2e2e2;"></div>
<div class="t" style="left:487.80px;top:308.80px;font-size:15px;line-height:18px;color:#3a3a3a;letter-spacing:-0.096px;">Article</div>
<svg style="left:571.5px;top:313px" width="8" height="8" viewBox="0 0 8 8"><path d="M0.5,0.6 H7.5 L4.7,3.6 V7 H3.3 V3.6z" fill="#fff" stroke="#858585" stroke-width="1"/></svg>
<div class="t" style="left:453.60px;top:332.80px;font-size:15px;line-height:18px;color:#444;letter-spacing:-0.231px;">FT2758-100_PEI</div>
<div class="b" style="left:769px;top:305px;width:1px;height:26px;background:linear-gradient(#ececec,#d6d6d6);"></div>
<div class="b" style="left:769px;top:331px;width:1px;height:24px;background:#e2e2e2;"></div>
<div class="t" style="left:597.30px;top:308.80px;font-size:15px;line-height:18px;color:#3a3a3a;letter-spacing:-0.180px;">Description_Demande</div>
<svg style="left:757.5px;top:313px" width="8" height="8" viewBox="0 0 8 8"><path d="M0.5,0.6 H7.5 L4.7,3.6 V7 H3.3 V3.6z" fill="#fff" stroke="#858585" stroke-width="1"/></svg>
<div class="t" style="left:590.60px;top:332.80px;font-size:15px;line-height:18px;color:#444;letter-spacing:-0.065px;">POUDRAGE Equerre de</div>
<div class="b" style="left:886px;top:305px;width:1px;height:26px;background:linear-gradient(#ececec,#d6d6d6);"></div>
<div class="b" style="left:886px;top:331px;width:1px;height:24px;background:#e2e2e2;"></div>
<div class="t" style="left:791.30px;top:308.80px;font-size:15px;line-height:18px;color:#3a3a3a;letter-spacing:-0.123px;">Date_DA</div>
<svg style="left:874.5px;top:313px" width="8" height="8" viewBox="0 0 8 8"><path d="M0.5,0.6 H7.5 L4.7,3.6 V7 H3.3 V3.6z" fill="#fff" stroke="#858585" stroke-width="1"/></svg>
<div class="t" style="left:793.00px;top:332.80px;font-size:15px;line-height:18px;color:#444;letter-spacing:-0.198px;">11/04/2019</div>
<div class="b" style="left:1023px;top:305px;width:1px;height:26px;background:linear-gradient(#ececec,#d6d6d6);"></div>
<div class="b" style="left:1023px;top:331px;width:1px;height:24px;background:#e2e2e2;"></div>
<div class="t" style="left:902.80px;top:308.80px;font-size:15px;line-height:18px;color:#3a3a3a;letter-spacing:-0.141px;">Sous_Traitant</div>
<svg style="left:1011.5px;top:313px" width="8" height="8" viewBox="0 0 8 8"><path d="M0.5,0.6 H7.5 L4.7,3.6 V7 H3.3 V3.6z" fill="#fff" stroke="#858585" stroke-width="1"/></svg>
<div class="t" style="left:893.60px;top:333.80px;font-size:15px;line-height:18px;color:#444;letter-spacing:-0.125px;">SVPM</div>
<div class="b" style="left:1158px;top:305px;width:1px;height:26px;background:linear-gradient(#ececec,#d6d6d6);"></div>
<div class="b" style="left:1158px;top:331px;width:1px;height:24px;background:#e2e2e2;"></div>
<div class="t" style="left:1035.30px;top:308.80px;font-size:15px;line-height:18px;color:#3a3a3a;letter-spacing:-0.147px;">Date_Livraison</div>
<svg style="left:1146.5px;top:313px" width="8" height="8" viewBox="0 0 8 8"><path d="M0.5,0.6 H7.5 L4.7,3.6 V7 H3.3 V3.6z" fill="#fff" stroke="#858585" stroke-width="1"/></svg>
<div class="t" style="left:1056.00px;top:332.80px;font-size:15px;line-height:18px;color:#444;letter-spacing:-0.309px;">12/04/2019</div>
<div class="b" style="left:1268px;top:305px;width:1px;height:26px;background:linear-gradient(#ececec,#d6d6d6);"></div>
<div class="b" style="left:1268px;top:331px;width:1px;height:24px;background:#e2e2e2;"></div>
<div class="t" style="left:1179.30px;top:308.80px;font-size:15px;line-height:18px;color:#3a3a3a;letter-spacing:-0.215px;">Quantité</div>
<svg style="left:1256.5px;top:313px" width="8" height="8" viewBox="0 0 8 8"><path d="M0.5,0.6 H7.5 L4.7,3.6 V7 H3.3 V3.6z" fill="#fff" stroke="#858585" stroke-width="1"/></svg>
<div class="t" style="left:1255.70px;top:333.80px;font-size:15px;line-height:18px;color:#444;">1</div>
<div class="b" style="left:1378px;top:305px;width:1px;height:26px;background:linear-gradient(#ececec,#d6d6d6);"></div>
<div class="b" style="left:1378px;top:331px;width:1px;height:24px;background:#e2e2e2;"></div>
<div class="t" style="left:1283.30px;top:308.80px;font-size:15px;line-height:18px;color:#3a3a3a;letter-spacing:-0.138px;">Qté_livrée</div>
<svg style="left:1366.5px;top:313px" width="8" height="8" viewBox="0 0 8 8"><path d="M0.5,0.6 H7.5 L4.7,3.6 V7 H3.3 V3.6z" fill="#fff" stroke="#858585" stroke-width="1"/></svg>
<div class="t" style="left:1365.70px;top:333.80px;font-size:15px;line-height:18px;color:#444;">0</div>
<div class="b" style="left:1502px;top:305px;width:1px;height:26px;background:linear-gradient(#ececec,#d6d6d6);"></div>
<div class="b" style="left:1502px;top:331px;width:1px;height:24px;background:#e2e2e2;"></div>
<div class="t" style="left:1390.30px;top:308.80px;font-size:15px;line-height:18px;color:#3a3a3a;letter-spacing:-0.205px;">Qté_Rebutée</div>
<svg style="left:1490.5px;top:313px" width="8" height="8" viewBox="0 0 8 8"><path d="M0.5,0.6 H7.5 L4.7,3.6 V7 H3.3 V3.6z" fill="#fff" stroke="#858585" stroke-width="1"/></svg>
<div class="t" style="left:1489.70px;top:333.80px;font-size:15px;line-height:18px;color:#444;">0</div>
<div class="b" style="left:1639px;top:305px;width:1px;height:26px;background:linear-gradient(#ececec,#d6d6d6);"></div>
<div class="b" style="left:1639px;top:331px;width:1px;height:24px;background:#e2e2e2;"></div>
<div class="t" style="left:1522.80px;top:308.80px;font-size:15px;line-height:18px;color:#3a3a3a;letter-spacing:-0.156px;">Unité_Article</div>
<svg style="left:1627.5px;top:313px" width="8" height="8" viewBox="0 0 8 8"><path d="M0.5,0.6 H7.5 L4.7,3.6 V7 H3.3 V3.6z" fill="#fff" stroke="#858585" stroke-width="1"/></svg>
<div class="t" style="left:1509.60px;top:333.80px;font-size:15px;line-height:18px;color:#444;letter-spacing:0.057px;">PCE</div>
<div class="b" style="left:1756px;top:305px;width:1px;height:26px;background:linear-gradient(#ececec,#d6d6d6);"></div>
<div class="b" style="left:1756px;top:331px;width:1px;height:24px;background:#e2e2e2;"></div>
<div class="t" style="left:1651.30px;top:308.80px;font-size:15px;line-height:18px;color:#3a3a3a;letter-spacing:-0.255px;">Montant_HT</div>
<svg style="left:1744.5px;top:313px" width="8" height="8" viewBox="0 0 8 8"><path d="M0.5,0.6 H7.5 L4.7,3.6 V7 H3.3 V3.6z" fill="#fff" stroke="#858585" stroke-width="1"/></svg>
<div class="t" style="left:1723.70px;top:333.80px;font-size:15px;line-height:18px;color:#444;letter-spacing:-0.301px;">0.85</div>
<div class="b" style="left:1893px;top:305px;width:1px;height:26px;background:linear-gradient(#ececec,#d6d6d6);"></div>
<div class="b" style="left:1893px;top:331px;width:1px;height:24px;background:#e2e2e2;"></div>
<div class="t" style="left:1801.80px;top:308.80px;font-size:15px;line-height:18px;color:#3a3a3a;letter-spacing:0.328px;">Taxe</div>
<svg style="left:1881.5px;top:313px" width="8" height="8" viewBox="0 0 8 8"><path d="M0.5,0.6 H7.5 L4.7,3.6 V7 H3.3 V3.6z" fill="#fff" stroke="#858585" stroke-width="1"/></svg>
<div class="t" style="left:1763.60px;top:333.80px;font-size:15px;line-height:18px;color:#444;">1</div>
<div class="b" style="left:16px;top:355px;width:1882px;height:1px;background:#dcdcdc;"></div>
<div class="b" style="left:36px;top:331px;width:1862px;height:24px;border:1px dotted #222;border-right:none;"></div>
<div class="b" style="left:22px;top:708px;width:1876px;height:17px;background:#d6d6d6;"></div>
<div class="b" style="left:22px;top:708px;width:17px;height:17px;background:#fff;border:1px solid #a8a8a8;"></div>
<div class="b" style="left:39px;top:708px;width:636px;height:17px;background:#fff;border:1px solid #a8a8a8;"></div>
<div class="b" style="left:1880px;top:708px;width:17px;height:17px;background:#fff;border:1px solid #a8a8a8;"></div>
<svg style="left:28px;top:713px" width="4" height="7" viewBox="0 0 4 7"><path d="M4,0 L0,3.5 L4,7z" fill="#333"/></svg>
<svg style="left:1887px;top:713px" width="4" height="7" viewBox="0 0 4 7"><path d="M0,0 L4,3.5 L0,7z" fill="#333"/></svg>
<div class="b" style="left:16px;top:787px;width:1882px;height:349px;background:#fff;"></div>
<div class="b" style="left:16px;top:787px;width:1882px;height:27px;background:#f0f8ff;"></div>
<div class="t" style="left:907.91px;top:792.50px;font-size:13px;line-height:16px;color:#000;font-weight:bold;letter-spacing:0.538px;text-shadow:0.4px 0 0 #000;">DAST Choisies</div>
<div class="b" style="left:16px;top:814px;width:1882px;height:26px;background:linear-gradient(#fafbfc,#f6f6f6 40%,#ebebeb 70%,#e0e0e0);"></div>
<div class="b" style="left:16px;top:840px;width:20px;height:24px;background:#f3f3f3;"></div>
<div class="b" style="left:36px;top:840px;width:1px;height:24px;background:#e2e2e2;"></div>
<svg style="left:19px;top:820px" width="15" height="13" viewBox="0 0 15 13"><rect x="0" y="0" width="15" height="13" fill="#6b6b6b"/><rect x="1.2" y="1.2" width="3.4" height="2.8" fill="#fff"/><rect x="5.8" y="1.2" width="3.4" height="2.8" fill="#fff"/><rect x="1.2" y="5.2" width="3.4" height="2.8" fill="#fff"/><rect x="5.8" y="5.2" width="3.4" height="2.8" fill="#fff"/><rect x="1.2" y="9.2" width="3.4" height="2.8" fill="#fff"/><rect x="5.8" y="9.2" width="3.4" height="2.8" fill="#fff"/></svg>
<svg style="left:24px;top:848px" width="5" height="10" viewBox="0 0 5 10"><path d="M0,0 L5,4.8 L0,9.6z" fill="#111"/></svg>
<div class="b" style="left:172px;top:814px;width:1px;height:26px;background:linear-gradient(#ececec,#d6d6d6);"></div>
<div class="b" style="left:172px;top:840px;width:1px;height:24px;background:#e2e2e2;"></div>
<div class="t" style="left:60.30px;top:817.80px;font-size:15px;line-height:18px;color:#3a3a3a;letter-spacing:-0.105px;">No_DA_ST</div>
<svg style="left:160.5px;top:822px" width="8" height="8" viewBox="0 0 8 8"><path d="M0.5,0.6 H7.5 L4.7,3.6 V7 H3.3 V3.6z" fill="#fff" stroke="#858585" stroke-width="1"/></svg>
<div class="t" style="left:43.60px;top:842.80px;font-size:15px;line-height:18px;color:#444;letter-spacing:0.064px;">DST11103</div>
<div class="b" style="left:309px;top:814px;width:1px;height:26px;background:linear-gradient(#ececec,#d6d6d6);"></div>
<div class="b" style="left:309px;top:840px;width:1px;height:24px;background:#e2e2e2;"></div>
<div class="t" style="left:210.30px;top:817.80px;font-size:15px;line-height:18px;color:#3a3a3a;letter-spacing:-0.069px;">No_OF</div>
<svg style="left:297.5px;top:822px" width="8" height="8" viewBox="0 0 8 8"><path d="M0.5,0.6 H7.5 L4.7,3.6 V7 H3.3 V3.6z" fill="#fff" stroke="#858585" stroke-width="1"/></svg>
<div class="t" style="left:179.60px;top:842.80px;font-size:15px;line-height:18px;color:#444;letter-spacing:-0.221px;">OF12259</div>
<div class="b" style="left:446px;top:814px;width:1px;height:26px;background:linear-gradient(#ececec,#d6d6d6);"></div>
<div class="b" style="left:446px;top:840px;width:1px;height:24px;background:#e2e2e2;"></div>
<div class="t" style="left:336.80px;top:817.80px;font-size:15px;line-height:18px;color:#3a3a3a;letter-spacing:-0.131px;">No_Phase</div>
<svg style="left:434.5px;top:822px" width="8" height="8" viewBox="0 0 8 8"><path d="M0.5,0.6 H7.5 L4.7,3.6 V7 H3.3 V3.6z" fill="#fff" stroke="#858585" stroke-width="1"/></svg>
<div class="t" style="left:316.60px;top:842.80px;font-size:15px;line-height:18px;color:#444;letter-spacing:-0.344px;">10</div>
<div class="b" style="left:583px;top:814px;width:1px;height:26px;background:linear-gradient(#ececec,#d6d6d6);"></div>
<div class="b" style="left:583px;top:840px;width:1px;height:24px;background:#e2e2e2;"></div>
<div class="t" style="left:487.80px;top:817.80px;font-size:15px;line-height:18px;color:#3a3a3a;letter-spacing:-0.096px;">Article</div>
<svg style="left:571.5px;top:822px" width="8" height="8" viewBox="0 0 8 8"><path d="M0.5,0.6 H7.5 L4.7,3.6 V7 H3.3 V3.6z" fill="#fff" stroke="#858585" stroke-width="1"/></svg>
<div class="t" style="left:453.60px;top:841.80px;font-size:15px;line-height:18px;color:#444;letter-spacing:-0.254px;">FT2758-100_MIR</div>
<div class="b" style="left:769px;top:814px;width:1px;height:26px;background:linear-gradient(#ececec,#d6d6d6);"></div>
<div class="b" style="left:769px;top:840px;width:1px;height:24px;background:#e2e2e2;"></div>
<div class="t" style="left:597.30px;top:817.80px;font-size:15px;line-height:18px;color:#3a3a3a;letter-spacing:-0.180px;">Description_Demande</div>
<svg style="left:757.5px;top:822px" width="8" height="8" viewBox="0 0 8 8"><path d="M0.5,0.6 H7.5 L4.7,3.6 V7 H3.3 V3.6z" fill="#fff" stroke="#858585" stroke-width="1"/></svg>
<div class="t" style="left:590.60px;top:841.80px;font-size:15px;line-height:18px;color:#444;letter-spacing:-0.065px;">POUDRAGE Equerre de</div>
<div class="b" style="left:886px;top:814px;width:1px;height:26px;background:linear-gradient(#ececec,#d6d6d6);"></div>
<div class="b" style="left:886px;top:840px;width:1px;height:24px;background:#e2e2e2;"></div>
<div class="t" style="left:791.30px;top:817.80px;font-size:15px;line-height:18px;color:#3a3a3a;letter-spacing:-0.123px;">Date_DA</div>
<svg style="left:874.5px;top:822px" width="8" height="8" viewBox="0 0 8 8"><path d="M0.5,0.6 H7.5 L4.7,3.6 V7 H3.3 V3.6z" fill="#fff" stroke="#858585" stroke-width="1"/></svg>
<div class="t" style="left:793.00px;top:841.80px;font-size:15px;line-height:18px;color:#444;letter-spacing:-0.198px;">11/04/2019</div>
<div class="b" style="left:1023px;top:814px;width:1px;height:26px;background:linear-gradient(#ececec,#d6d6d6);"></div>
<div class="b" style="left:1023px;top:840px;width:1px;height:24px;background:#e2e2e2;"></div>
<div class="t" style="left:902.80px;top:817.80px;font-size:15px;line-height:18px;color:#3a3a3a;letter-spacing:-0.141px;">Sous_Traitant</div>
<svg style="left:1011.5px;top:822px" width="8" height="8" viewBox="0 0 8 8"><path d="M0.5,0.6 H7.5 L4.7,3.6 V7 H3.3 V3.6z" fill="#fff" stroke="#858585" stroke-width="1"/></svg>
<div class="t" style="left:893.60px;top:842.80px;font-size:15px;line-height:18px;color:#444;letter-spacing:-0.125px;">SVPM</div>
<div class="b" style="left:1158px;top:814px;width:1px;height:26px;background:linear-gradient(#ececec,#d6d6d6);"></div>
<div class="b" style="left:1158px;top:840px;width:1px;height:24px;background:#e2e2e2;"></div>
<div class="t" style="left:1035.30px;top:817.80px;font-size:15px;line-height:18px;color:#3a3a3a;letter-spacing:-0.147px;">Date_Livraison</div>
<svg style="left:1146.5px;top:822px" width="8" height="8" viewBox="0 0 8 8"><path d="M0.5,0.6 H7.5 L4.7,3.6 V7 H3.3 V3.6z" fill="#fff" stroke="#858585" stroke-width="1"/></svg>
<div class="t" style="left:1056.00px;top:841.80px;font-size:15px;line-height:18px;color:#444;letter-spacing:-0.309px;">12/04/2019</div>
<div class="b" style="left:1268px;top:814px;width:1px;height:26px;background:linear-gradient(#ececec,#d6d6d6);"></div>
<div class="b" style="left:1268px;top:840px;width:1px;height:24px;background:#e2e2e2;"></div>
<div class="t" style="left:1179.30px;top:817.80px;font-size:15px;line-height:18px;color:#3a3a3a;letter-spacing:-0.215px;">Quantité</div>
<svg style="left:1256.5px;top:822px" width="8" height="8" viewBox="0 0 8 8"><path d="M0.5,0.6 H7.5 L4.7,3.6 V7 H3.3 V3.6z" fill="#fff" stroke="#858585" stroke-width="1"/></svg>
<div class="t" style="left:1255.70px;top:842.80px;font-size:15px;line-height:18px;color:#444;">1</div>
<div class="b" style="left:1378px;top:814px;width:1px;height:26px;background:linear-gradient(#ececec,#d6d6d6);"></div>
<div class="b" style="left:1378px;top:840px;width:1px;height:24px;background:#e2e2e2;"></div>
<div class="t" style="left:1283.30px;top:817.80px;font-size:15px;line-height:18px;color:#3a3a3a;letter-spacing:-0.138px;">Qté_livrée</div>
<svg style="left:1366.5px;top:822px" width="8" height="8" viewBox="0 0 8 8"><path d="M0.5,0.6 H7.5 L4.7,3.6 V7 H3.3 V3.6z" fill="#fff" stroke="#858585" stroke-width="1"/></svg>
<div class="t" style="left:1365.70px;top:842.80px;font-size:15px;line-height:18px;color:#444;">0</div>
<div class="b" style="left:1502px;top:814px;width:1px;height:26px;background:linear-gradient(#ececec,#d6d6d6);"></div>
<div class="b" style="left:1502px;top:840px;width:1px;height:24px;background:#e2e2e2;"></div>
<div class="t" style="left:1390.30px;top:817.80px;font-size:15px;line-height:18px;color:#3a3a3a;letter-spacing:-0.205px;">Qté_Rebutée</div>
<svg style="left:1490.5px;top:822px" width="8" height="8" viewBox="0 0 8 8"><path d="M0.5,0.6 H7.5 L4.7,3.6 V7 H3.3 V3.6z" fill="#fff" stroke="#858585" stroke-width="1"/></svg>
<div class="t" style="left:1489.70px;top:842.80px;font-size:15px;line-height:18px;color:#444;">0</div>
<div class="b" style="left:1639px;top:814px;width:1px;height:26px;background:linear-gradient(#ececec,#d6d6d6);"></div>
<div class="b" style="left:1639px;top:840px;width:1px;height:24px;background:#e2e2e2;"></div>
<div class="t" style="left:1522.80px;top:817.80px;font-size:15px;line-height:18px;color:#3a3a3a;letter-spacing:-0.156px;">Unité_Article</div>
<svg style="left:1627.5px;top:822px" width="8" height="8" viewBox="0 0 8 8"><path d="M0.5,0.6 H7.5 L4.7,3.6 V7 H3.3 V3.6z" fill="#fff" stroke="#858585" stroke-width="1"/></svg>
<div class="t" style="left:1509.60px;top:842.80px;font-size:15px;line-height:18px;color:#444;letter-spacing:0.057px;">PCE</div>
<div class="b" style="left:1756px;top:814px;width:1px;height:26px;background:linear-gradient(#ececec,#d6d6d6);"></div>
<div class="b" style="left:1756px;top:840px;width:1px;height:24px;background:#e2e2e2;"></div>
<div class="t" style="left:1651.30px;top:817.80px;font-size:15px;line-height:18px;color:#3a3a3a;letter-spacing:-0.255px;">Montant_HT</div>
<svg style="left:1744.5px;top:822px" width="8" height="8" viewBox="0 0 8 8"><path d="M0.5,0.6 H7.5 L4.7,3.6 V7 H3.3 V3.6z" fill="#fff" stroke="#858585" stroke-width="1"/></svg>
<div class="t" style="left:1723.70px;top:842.80px;font-size:15px;line-height:18px;color:#444;letter-spacing:-0.301px;">0.85</div>
<div class="b" style="left:1893px;top:814px;width:1px;height:26px;background:linear-gradient(#ececec,#d6d6d6);"></div>
<div class="b" style="left:1893px;top:840px;width:1px;height:24px;background:#e2e2e2;"></div>
<div class="t" style="left:1801.80px;top:817.80px;font-size:15px;line-height:18px;color:#3a3a3a;letter-spacing:0.328px;">Taxe</div>
<svg style="left:1881.5px;top:822px" width="8" height="8" viewBox="0 0 8 8"><path d="M0.5,0.6 H7.5 L4.7,3.6 V7 H3.3 V3.6z" fill="#fff" stroke="#858585" stroke-width="1"/></svg>
<div class="t" style="left:1763.60px;top:842.80px;font-size:15px;line-height:18px;color:#444;">1</div>
<div class="b" style="left:16px;top:864px;width:1882px;height:1px;background:#dcdcdc;"></div>
<div class="b" style="left:22px;top:1119px;width:1876px;height:17px;background:#d6d6d6;"></div>
<div class="b" style="left:22px;top:1119px;width:17px;height:17px;background:#fff;border:1px solid #a8a8a8;"></div>
<div class="b" style="left:39px;top:1119px;width:636px;height:17px;background:#fff;border:1px solid #a8a8a8;"></div>
<div class="b" style="left:1880px;top:1119px;width:17px;height:17px;background:#fff;border:1px solid #a8a8a8;"></div>
<svg style="left:28px;top:1124px" width="4" height="7" viewBox="0 0 4 7"><path d="M4,0 L0,3.5 L4,7z" fill="#333"/></svg>
<svg style="left:1887px;top:1124px" width="4" height="7" viewBox="0 0 4 7"><path d="M0,0 L4,3.5 L0,7z" fill="#333"/></svg>
<div class="b" style="left:16px;top:734px;width:209px;height:41px;background:#f5f5f5;border:2px solid #cbcbcb;"></div>
<div class="t" style="left:105.50px;top:745.80px;font-size:15px;line-height:18px;color:#333;letter-spacing:-0.076px;">Ajouter</div>
<div class="b" style="left:244px;top:734px;width:209px;height:41px;background:#f5f5f5;border:2px solid #cbcbcb;"></div>
<div class="t" style="left:319.00px;top:745.80px;font-size:15px;line-height:18px;color:#333;letter-spacing:-0.186px;">Ajouter tout</div>
<div class="b" style="left:465px;top:734px;width:209px;height:41px;background:#f5f5f5;border:2px solid #cbcbcb;"></div>
<div class="t" style="left:552.00px;top:745.80px;font-size:15px;line-height:18px;color:#333;letter-spacing:-0.051px;">Enlever</div>
<div class="b" style="left:686px;top:734px;width:209px;height:41px;background:#f5f5f5;border:2px solid #cbcbcb;"></div>
<div class="t" style="left:760.00px;top:745.80px;font-size:15px;line-height:18px;color:#333;letter-spacing:-0.130px;">Enlever tout</div>
<div class="b" style="left:927px;top:734px;width:505px;height:41px;background:#f5f5f5;border:2px solid #cbcbcb;"></div>
<div class="t" style="left:1088.50px;top:745.80px;font-size:15px;line-height:18px;color:#333;letter-spacing:-0.069px;">Générer la commande d'achat</div>
<div class="b" style="left:1461px;top:734px;width:209px;height:41px;background:#f5f5f5;border:2px solid #cbcbcb;"></div>
<div class="t" style="left:1548.00px;top:745.80px;font-size:15px;line-height:18px;color:#333;letter-spacing:-0.172px;">Annuler</div>
<div class="b" style="left:1682px;top:734px;width:209px;height:41px;background:#f5f5f5;border:2px solid #cbcbcb;"></div>
<div class="t" style="left:1770.50px;top:745.80px;font-size:15px;line-height:18px;color:#333;letter-spacing:0.109px;">Fermer</div>
<svg style="left:27px;top:749px" width="13" height="11" viewBox="0 0 13 11"><path d="M0,0 H12.6 L6.3,11z" fill="#000"/></svg><svg style="left:254px;top:748px" width="14" height="14" viewBox="0 0 14 14"><path d="M0.4,0 H13.6 L7,6.6z" fill="#000"/><path d="M0.4,7 H13.6 L7,13.8z" fill="#000"/></svg><svg style="left:476px;top:749px" width="13" height="11" viewBox="0 0 13 11"><path d="M0,10.6 H12.6 L6.3,0z" fill="#000"/></svg><svg style="left:696px;top:747.5px" width="14" height="14" viewBox="0 0 14 14"><path d="M0.6,6.6 H13.4 L7,0z" fill="#000"/><path d="M0.6,13.2 H13.4 L7,6.4z" fill="#000"/></svg><svg style="left:936px;top:746px" width="16" height="16" viewBox="0 0 16 16"><path d="M0.6,8.6 L3,6.6 L6.4,11 L13.4,0.4 L15.8,2 L6.8,15.8z" fill="#118a11"/></svg><svg style="left:1470px;top:747px" width="16" height="15" viewBox="0 0 16 15"><path d="M3.4,5 A6,6 0 1 1 3,10.6" fill="none" stroke="#e8141c" stroke-width="2.2"/><path d="M0.4,1.2 L1.2,7.4 L7,5.6z" fill="#e8141c"/></svg><svg style="left:1691px;top:746px" width="16" height="16" viewBox="0 0 16 16"><path d="M1.8,1.8 L14.4,14.4 M14.4,1.8 L1.8,14.4" stroke="#e8141c" stroke-width="3.8" fill="none"/></svg>
<div class="b" style="left:815px;top:347px;width:213px;height:154px;background:#fbfbfb;border:1px solid #979797;box-shadow:3px 3px 3px rgba(0,0,0,.5);"></div>
<div class="b" style="left:816px;top:348px;width:24px;height:152px;background:#f0f0f0;"></div>
<div class="b" style="left:817px;top:349px;width:209px;height:22px;background:#b5d7f3;border:1px solid #2a8ad4;"></div>
<div class="b" style="left:848px;top:374px;width:178px;height:1px;background:#c8c8c8;"></div>
<div class="b" style="left:848px;top:402px;width:178px;height:1px;background:#c8c8c8;"></div>
<div class="b" style="left:848px;top:474px;width:178px;height:1px;background:#c8c8c8;"></div>
<div class="t" style="left:851.00px;top:352.84px;font-size:12px;line-height:14px;color:#111;letter-spacing:-0.290px;">Voir la DAST...</div>
<div class="t" style="left:851.00px;top:380.84px;font-size:12px;line-height:14px;color:#111;letter-spacing:-0.422px;">Exporter vers Excel</div>
<div class="t" style="left:851.00px;top:409.14px;font-size:12px;line-height:14px;color:#111;letter-spacing:-0.252px;">Sauver la mise en page</div>
<div class="t" style="left:851.00px;top:430.84px;font-size:12px;line-height:14px;color:#111;letter-spacing:-0.203px;">Recharger la mise en page</div>
<div class="t" style="left:851.00px;top:453.14px;font-size:12px;line-height:14px;color:#111;letter-spacing:-0.188px;">Effacer la mise en page</div>
<div class="t" style="left:851.00px;top:480.84px;font-size:12px;line-height:14px;color:#111;letter-spacing:-0.099px;">Vue étendue</div>
<svg style="left:820px;top:380px" width="16" height="16" viewBox="0 0 16 16"><rect x="7" y="2" width="8.6" height="11.6" fill="#fff" stroke="#1e7145" stroke-width="0.8"/><rect x="9.6" y="3.4" width="2.4" height="1.2" fill="#1e7145"/><rect x="12.6" y="3.4" width="2.2" height="1.2" fill="#1e7145"/><rect x="9.6" y="5.5" width="2.4" height="1.2" fill="#1e7145"/><rect x="12.6" y="5.5" width="2.2" height="1.2" fill="#1e7145"/><rect x="9.6" y="7.6" width="2.4" height="1.2" fill="#1e7145"/><rect x="12.6" y="7.6" width="2.2" height="1.2" fill="#1e7145"/><rect x="9.6" y="9.700000000000001" width="2.4" height="1.2" fill="#1e7145"/><rect x="12.6" y="9.700000000000001" width="2.2" height="1.2" fill="#1e7145"/><rect x="9.6" y="11.8" width="2.4" height="1.2" fill="#1e7145"/><rect x="12.6" y="11.8" width="2.2" height="1.2" fill="#1e7145"/><path d="M0,1.8 L9.4,0 V15.8 L0,14z" fill="#1e7145"/><path d="M2.6,5 L6.6,10.8 M6.6,5 L2.6,10.8" stroke="#fff" stroke-width="1.4" fill="none"/></svg>
<div class="b" style="left:0px;top:0px;width:1920px;height:2px;background:#242424;"></div>
<div class="b" style="left:0px;top:0px;width:2px;height:1175px;background:#242424;"></div>
<div class="b" style="left:1918px;top:0px;width:2px;height:1175px;background:#242424;"></div>
<div class="b" style="left:0px;top:1173px;width:1920px;height:2px;background:#242424;"></div>
</body></html>
